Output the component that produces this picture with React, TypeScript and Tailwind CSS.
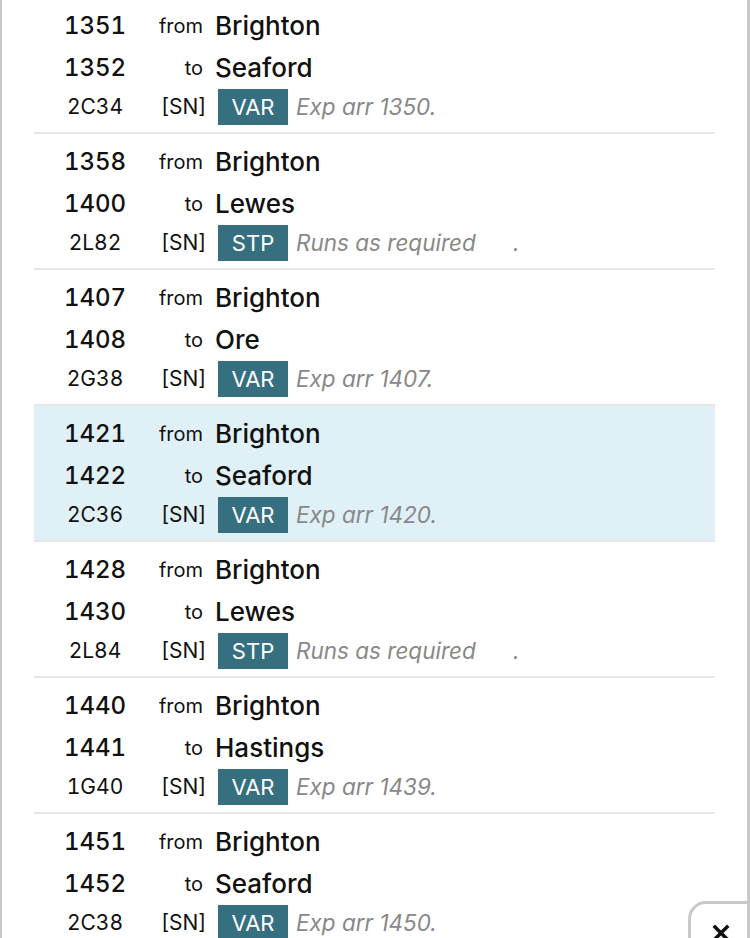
import React from "react";

type Service = {
  dep: string;
  arr: string;
  dest: string;
  code: string;
  kind: "VAR" | "STP";
  note: string;
  active?: boolean;
};

const services: Service[] = [
  { dep: "1351", arr: "1352", dest: "Seaford", code: "2C34", kind: "VAR", note: "Exp arr 1350." },
  { dep: "1358", arr: "1400", dest: "Lewes", code: "2L82", kind: "STP", note: "" },
  { dep: "1407", arr: "1408", dest: "Ore", code: "2G38", kind: "VAR", note: "Exp arr 1407." },
  { dep: "1421", arr: "1422", dest: "Seaford", code: "2C36", kind: "VAR", note: "Exp arr 1420.", active: true },
  { dep: "1428", arr: "1430", dest: "Lewes", code: "2L84", kind: "STP", note: "" },
  { dep: "1440", arr: "1441", dest: "Hastings", code: "1G40", kind: "VAR", note: "Exp arr 1439." },
  { dep: "1451", arr: "1452", dest: "Seaford", code: "2C38", kind: "VAR", note: "Exp arr 1450." },
];

const ServiceRow = ({ s }: { s: Service }) => {
  return (
    <div
      className={`pt-[7px] pb-[7px] border-b-2 border-[#e6e6e6] ${
        s.active ? "bg-[#dff0f6]" : "bg-white"
      }`}
    >
      {/* departure */}
      <div className="flex items-center h-[42px]">
        <div className="w-[122px] text-center text-[24px] font-medium tabular-nums text-[#111]">{s.dep}</div>
        <div className="w-[47px] text-right text-[20px] text-[#111]">from</div>
        <div className="ml-[12px] -mt-[2px] text-[26px] font-medium text-[#111]">Brighton</div>
      </div>
      {/* arrival */}
      <div className="flex items-center h-[42px]">
        <div className="w-[122px] text-center text-[24px] font-medium tabular-nums text-[#111]">{s.arr}</div>
        <div className="w-[47px] text-right text-[20px] text-[#111]">to</div>
        <div className="ml-[12px] -mt-[2px] text-[26px] font-medium text-[#111]">{s.dest}</div>
      </div>
      {/* headcode + operator */}
      <div className="flex items-center h-[36px]">
        <div className="w-[122px] text-center text-[21px] tabular-nums text-[#111]">{s.code}</div>
        <div className="w-[50px] text-right text-[21px] text-[#111]">[SN]</div>
        <div className="ml-[12px] w-[70px] h-[36px] flex items-center justify-center bg-[#366f80] text-white text-[22px]">
          {s.kind}
        </div>
        {s.kind === "STP" ? (
          <div className="ml-[8px] flex items-center text-[22.5px] italic text-[#888]">
            <span className="inline-block w-[217px]">Runs as required</span>
            <span>.</span>
          </div>
        ) : (
          <div className="ml-[8px] text-[22.5px] italic text-[#888]">{s.note}</div>
        )}
      </div>
    </div>
  );
};

export default function App() {
  return (
    <div
      className="relative w-[750px] h-[938px] overflow-hidden bg-white border-l-2 border-r-[3px] border-[#c8c8c8]"
      style={{ fontFamily: "Inter, 'Noto Sans', sans-serif" }}
    >
      <div className="-mt-[2px] px-[32px]">
        {services.map((s) => (
          <ServiceRow key={s.dep} s={s} />
        ))}
      </div>

      {/* close button */}
      <button className="absolute left-[686px] top-[901px] w-[80px] h-[60px] bg-white border-[3px] border-[#c8c8c8] rounded-tl-[18px] flex justify-start">
        <svg
          className="ml-[21px] mt-[20px]"
          width="18"
          height="18"
          viewBox="0 0 18 18"
          fill="none"
          stroke="#111"
          strokeWidth="3.5"
          strokeLinecap="square"
        >
          <path d="M3 3L15 15M15 3L3 15" />
        </svg>
      </button>
    </div>
  );
}
